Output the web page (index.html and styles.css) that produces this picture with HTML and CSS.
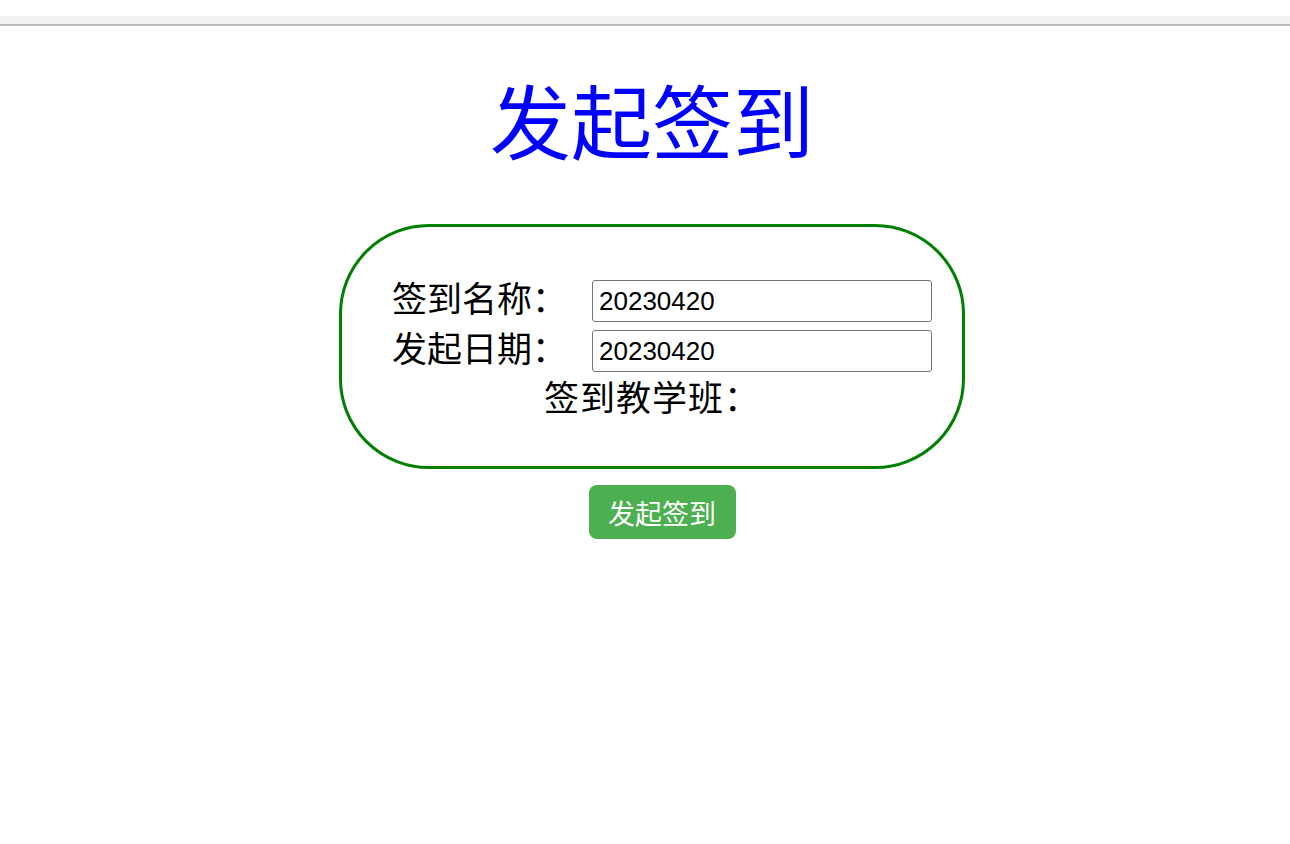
FILE: index.html
```html
<!DOCTYPE html>
<html lang="zh-CN">
<head>
  <meta charset="UTF-8">
  <title>发起签到</title>
  <link rel="stylesheet" href="styles.css">
</head>
<body>
  <div class="topbar"></div>

  <div class="page">
    <h1 class="title">发起签到</h1>

    <form class="sign-form" onsubmit="return false;">
      <div class="box">
        <div class="row">
          <label for="signName">签到名称：</label>
          <input type="text" id="signName" value="20230420">
        </div>
        <div class="row">
          <label for="signDate">发起日期：</label>
          <input type="text" id="signDate" value="20230420">
        </div>
        <div class="row row-center">签到教学班：</div>
      </div>

      <button type="submit">发起签到</button>
    </form>
  </div>
</body>
</html>
```

FILE: styles.css
```css
body {
  margin: 0;
  font-family: "Liberation Serif", "Noto Sans CJK SC", serif;
  background: #fff;
}

.topbar {
  margin-top: 16px;
  height: 8px;
  background: #f2f2f2;
  border-bottom: 2px solid #bbb;
}

.page {
  padding-left: 14px;
}

.title {
  margin: 50px 0 48px;
  text-align: center;
  font-size: 81px;
  line-height: 100px;
  font-weight: normal;
  color: #0000ff;
}

.sign-form {
  display: flex;
  flex-direction: column;
  align-items: center;
}

.box {
  box-sizing: border-box;
  width: 626px;
  height: 245px;
  padding: 49px 0 0;
  border: 3px solid #008000;
  border-radius: 90px;
}

.row {
  display: flex;
  align-items: center;
  justify-content: center;
  height: 50px;
  padding-left: 20px;
  font-size: 35px;
}

.row label {
  padding-bottom: 10px;
}

.row-center {
  padding: 0 0 12px 0;
  height: 38px;
  letter-spacing: 1px;
}

label {
  width: 200px;
}

input {
  box-sizing: border-box;
  width: 340px;
  height: 42px;
  padding: 0 6px;
  font-family: "Liberation Sans", Arial, sans-serif;
  font-size: 26px;
  color: #000;
  border: 1px solid #767676;
  border-radius: 3px;
}

button {
  margin: 16px 0 0 20px;
  width: 147px;
  height: 54px;
  padding: 0;
  background: #4CAF50;
  color: #fff;
  font-family: "Noto Sans CJK SC", sans-serif;
  font-size: 27px;
  border: none;
  border-radius: 8px;
  cursor: pointer;
}
```
